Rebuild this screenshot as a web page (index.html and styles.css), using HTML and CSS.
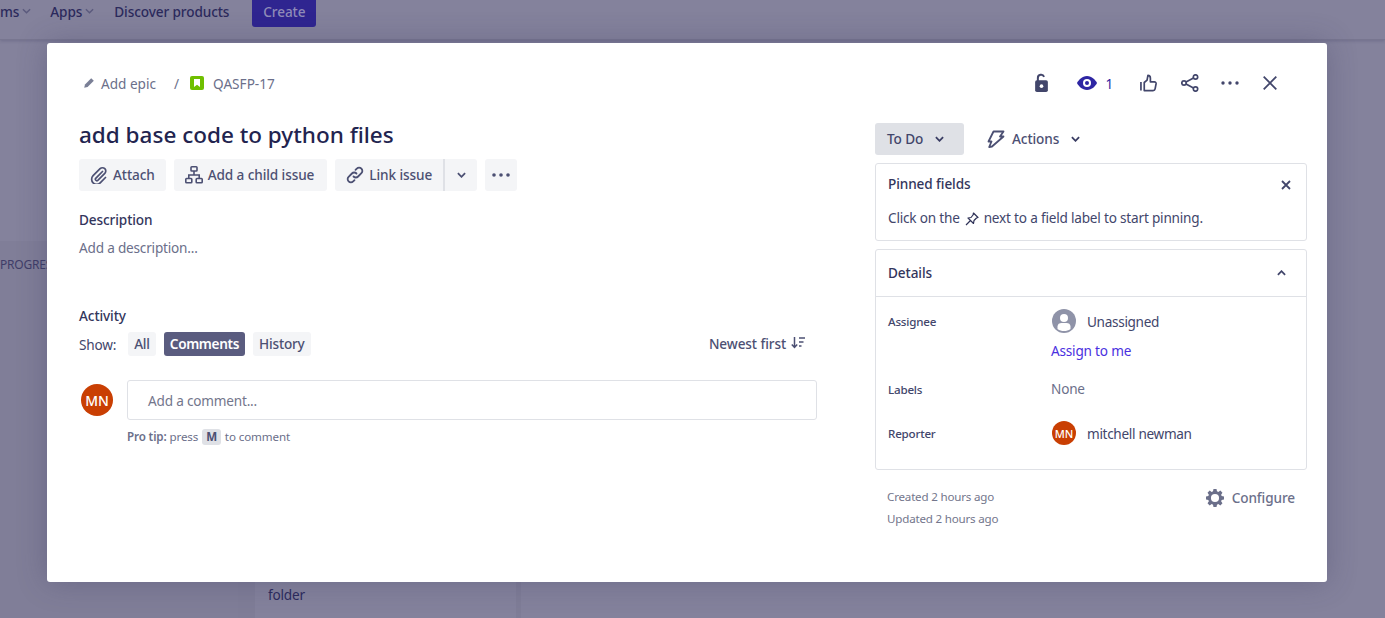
FILE: index.html
```html
<!DOCTYPE html>
<html lang="en">
<head>
<meta charset="utf-8">
<title>QASFP-17</title>
<link rel="stylesheet" href="styles.css">
</head>
<body>
<div class="page">
  <header class="topbar">
    <span class="nav-item nav-cut">ms<svg class="nav-chev" viewBox="0 0 10 6"><path d="M1 1l4 4 4-4"/></svg></span>
    <span class="nav-item">Apps<svg class="nav-chev" viewBox="0 0 10 6"><path d="M1 1l4 4 4-4"/></svg></span>
    <span class="nav-item">Discover products</span>
    <span class="create">Create</span>
  </header>
  <div class="board">
    <div class="lane lane-one"><span class="lane-title">PROGRESS</span></div>
    <div class="lane lane-two"><div class="bg-card"><span class="bg-card-text">folder</span></div></div>
  </div>
</div>

<div class="modal">
  <div class="modal-head">
    <div class="crumbs">
      <svg class="i12" viewBox="0 0 12 12"><path fill="#7a7f96" d="M8.200 1.200l2.600 2.600-6.200 6.200-3.400.8.8-3.400z"/></svg>
      <span class="crumb">Add epic</span>
      <span class="crumb-sep">/</span>
      <svg class="i14" viewBox="0 0 14 14"><rect width="14" height="14" rx="2" fill="#6fbf00"/><path fill="#fff" d="M4 3h6v8L7 8.800 4 11z"/></svg>
      <span class="crumb">QASFP-17</span>
    </div>
    <div class="head-actions">
      <svg class="ha ha-lock" viewBox="0 0 16 22"><path fill="none" stroke="#42466b" stroke-width="2.200" d="M4 9V5.500a3.500 3.500 0 0 1 6.800-1.200"/><rect x="1" y="8" width="14" height="13" rx="2" fill="#42466b"/><circle cx="8" cy="14.500" r="2" fill="#fff"/></svg>
      <span class="watch">
        <svg class="ha-eye" viewBox="0 0 20 14"><path fill="#2e26a3" d="M10 0c5 0 8.500 4 10 7-1.500 3-5 7-10 7S1.500 10 0 7c1.500-3 5-7 10-7z"/><circle cx="10" cy="7" r="4" fill="#fff"/><circle cx="10" cy="7" r="2" fill="#2e26a3"/></svg>
        <span class="watch-count">1</span>
      </span>
      <svg class="ha ha-thumb" viewBox="0 0 18 18"><path fill="none" stroke="#42466b" stroke-width="1.800" stroke-linejoin="round" d="M1 8v9M4.500 8.500v8.500h9.300c1.200 0 2-.7 2.200-1.800l1-5.200c.2-1.200-.6-2.200-1.800-2.200H11V4c0-1.700-1-3-2.600-3L7.500 6z"/></svg>
      <svg class="ha ha-share" viewBox="0 0 18 18"><g fill="none" stroke="#42466b" stroke-width="1.700"><circle cx="14.500" cy="3" r="2.200"/><circle cx="3" cy="9" r="2.200"/><circle cx="14.500" cy="15" r="2.200"/><path d="M5 8l7.500-4M5 10l7.500 4"/></g></svg>
      <svg class="ha ha-more" viewBox="0 0 18 4"><circle cx="2" cy="2" r="1.700" fill="#42466b"/><circle cx="9" cy="2" r="1.700" fill="#42466b"/><circle cx="16" cy="2" r="1.700" fill="#42466b"/></svg>
      <svg class="ha ha-close" viewBox="0 0 14 14"><path fill="none" stroke="#42466b" stroke-width="1.800" d="M.7.700l12.600 12.600M13.300.700L.7 13.300"/></svg>
    </div>
  </div>

  <div class="modal-body">
    <main class="left">
      <h1 class="title">add base code to python files</h1>
      <div class="toolbar">
        <button class="tbtn">
          <svg class="i18" viewBox="0 0 18 18"><path fill="none" stroke="#4c5073" stroke-width="1.700" stroke-linecap="round" d="M12.500 5.500l-6.800 6.800a1.500 1.500 0 0 0 2.100 2.100l7-7a3.300 3.300 0 0 0-4.700-4.700l-7 7a5 5 0 0 0 7.100 7.100l5.300-5.300"/></svg>
          Attach
        </button>
        <button class="tbtn tbtn-child">
          <svg class="i18" viewBox="0 0 18 18"><g fill="none" stroke="#4c5073" stroke-width="1.600"><rect x="6" y=".8" width="6" height="4.200" rx=".8"/><rect x=".8" y="12.500" width="6" height="4.200" rx=".8"/><rect x="11.200" y="12.500" width="6" height="4.200" rx=".8"/><path d="M9 5v4M3.800 12.500V9h10.400v3.500"/></g></svg>
          Add a child issue
        </button>
        <span class="split">
          <button class="tbtn tbtn-left">
            <svg class="i18" viewBox="0 0 18 18"><g fill="none" stroke="#4c5073" stroke-width="1.800" stroke-linecap="round"><path d="M7.500 10.500a3.200 3.200 0 0 0 4.600 0l3.300-3.300a3.200 3.200 0 0 0-4.600-4.600L9.500 3.900"/><path d="M10.500 7.500a3.200 3.200 0 0 0-4.600 0l-3.300 3.300a3.200 3.200 0 0 0 4.600 4.600l1.300-1.300"/></g></svg>
            Link issue
          </button>
          <button class="tbtn tbtn-right"><svg class="chev" viewBox="0 0 10 6"><path d="M1 1l4 4 4-4"/></svg></button>
        </span>
        <button class="tbtn tbtn-more"><svg class="more-sm" viewBox="0 0 18 4"><circle cx="2" cy="2" r="1.800"/><circle cx="9" cy="2" r="1.800"/><circle cx="16" cy="2" r="1.800"/></svg></button>
      </div>

      <h2 class="label desc-label">Description</h2>
      <p class="desc-ph">Add a description...</p>

      <h2 class="label activity-label">Activity</h2>
      <div class="show-row">
        <span class="show">Show:</span>
        <span class="pill">All</span>
        <span class="pill pill-on">Comments</span>
        <span class="pill">History</span>
        <span class="newest">Newest first
          <svg class="sort" viewBox="0 0 14 12"><g fill="none" stroke="#4c5073" stroke-width="1.500"><path d="M3.500 0v10M.8 7.500l2.700 3 2.700-3"/><path d="M8 1h6M8 5h4.500M8 9h2.500"/></g></svg>
        </span>
      </div>

      <div class="comment">
        <span class="avatar avatar-lg">MN</span>
        <div class="comment-col">
          <div class="comment-box">Add a comment...</div>
          <p class="tip"><b>Pro tip:</b> press <kbd class="key">M</kbd> to comment</p>
        </div>
      </div>
    </main>

    <aside class="right">
      <div class="status-row">
        <button class="status">To Do<svg class="chev chev-dark" viewBox="0 0 10 6"><path d="M1 1l4 4 4-4"/></svg></button>
        <span class="actions">
          <svg class="i18" viewBox="0 0 18 18"><path fill="none" stroke="#4c5073" stroke-width="1.800" stroke-linejoin="round" d="M6.500 1.500h10L13 6.500h3.500L5 16.500l-2.800.5 2.300-5.500H1.500z"/></svg>
          Actions
          <svg class="chev chev-dark" viewBox="0 0 10 6"><path d="M1 1l4 4 4-4"/></svg>
        </span>
      </div>

      <section class="card pinned">
        <div class="pinned-top">
          <span class="card-title">Pinned fields</span>
          <svg class="x-sm" viewBox="0 0 10 10"><path fill="none" stroke="#42466b" stroke-width="1.800" d="M1 1l8 8M9 1L1 9"/></svg>
        </div>
        <p class="pinned-text">Click on the
          <svg class="pin" viewBox="0 0 14 14"><path fill="none" stroke="#2f3257" stroke-width="1.200" stroke-linejoin="round" d="M8.500 1l4.500 4.500-1.500.5-2.500 2.500-.5 3L3 6l3-.5L8 3zM5.500 8.500L1 13"/></svg>
          next to a field label to start pinning.</p>
      </section>

      <section class="card details">
        <div class="details-head">
          <span class="card-title">Details</span>
          <svg class="chev chev-up" viewBox="0 0 10 6"><path d="M1 5l4-4 4 4"/></svg>
        </div>
        <div class="fields">
          <span class="f-label f-assignee">Assignee</span>
          <div class="f-value">
            <div class="person">
              <svg class="avatar-svg" viewBox="0 0 24 24"><circle cx="12" cy="12" r="12" fill="#8f93a8"/><circle cx="12" cy="9" r="4" fill="#fff"/><path fill="#fff" d="M5.500 20v-2.500c0-2.500 2-3.500 4-3.500h5c2 0 4 1 4 3.500V20c-2 1.500-4 2-6.500 2s-4.500-.5-6.500-2z"/></svg>
              <span>Unassigned</span>
            </div>
            <a class="assign">Assign to me</a>
          </div>
          <span class="f-label f-labels">Labels</span>
          <span class="f-value f-none">None</span>
          <span class="f-label f-reporter">Reporter</span>
          <div class="f-value person">
            <span class="avatar avatar-sm">MN</span>
            <span>mitchell newman</span>
          </div>
        </div>
      </section>

      <div class="meta">
        <div class="dates">
          <span>Created 2 hours ago</span>
          <span>Updated 2 hours ago</span>
        </div>
        <span class="configure">
          <svg class="gear" viewBox="0 0 20 20"><path fill="#6b6f8a" fill-rule="evenodd" d="M8.300 0h3.400l.5 2.600 1.500.6 2.200-1.500 2.400 2.400-1.500 2.200.6 1.500 2.600.5v3.400l-2.600.5-.6 1.500 1.500 2.200-2.400 2.400-2.200-1.500-1.500.6-.5 2.600H8.300l-.5-2.600-1.500-.6-2.200 1.500-2.400-2.400 1.500-2.200-.6-1.500L0 11.700V8.300l2.600-.5.6-1.500-1.500-2.200 2.400-2.400 2.200 1.500 1.500-.6zM10 5.500a4.500 4.500 0 1 0 0 9 4.500 4.500 0 0 0 0-9z"/></svg>
          Configure
        </span>
      </div>
    </aside>
  </div>
</div>
</body>
</html>
```
FILE: styles.css
```css
* { box-sizing: border-box; }
html, body { margin: 0; padding: 0; height: 100%; overflow: hidden; }
body {
  background: #84829c;
  font-family: "Noto Sans", "Open Sans", sans-serif;
  color: #2f3257;
  font-size: 13.600px;
  letter-spacing: -0.2px;
}
h1, h2, p { margin: 0; font-weight: inherit; }
button { font: inherit; letter-spacing: inherit; border: 0; margin: 0; padding: 0; color: inherit; }

.page { height: 618px; display: flex; flex-direction: column; }
.topbar {
  height: 40px;
  display: flex;
  align-items: flex-start;
  color: #2c2a5c;
  font-weight: 500;
  letter-spacing: -0.1px;
  border-bottom: 1px solid #787690;
  background: #84829c;
  box-shadow: 0 1px 3px rgba(50, 50, 90, .25);
}
.nav-item { display: inline-flex; align-items: center; height: 22px; margin-right: 20px; }
.nav-cut { margin-right: 19px; }
.nav-chev { width: 9px; height: 6px; margin-left: 3px; fill: none; stroke: #5b5a7d; stroke-width: 1.600; }
.create {
  margin-left: 3px;
  width: 64px;
  height: 27px;
  background: #2f2590;
  color: #8f8cb8;
  border-radius: 0 0 3px 3px;
  display: flex;
  align-items: center;
  justify-content: center;
  padding-bottom: 4px;
}
.board { flex: 1; display: flex; align-items: stretch; padding-top: 201px; }
.lane { background: #807e98; }
.lane-one { width: 238px; padding-top: 15px; color: #3f3d68; font-size: 12px; white-space: nowrap; overflow: hidden; }
.lane-two { width: 283px; display: flex; padding-left: 17px; background: #7f7d97; }
.bg-card { width: 261px; background: #84829c; display: flex; align-items: flex-end; padding: 0 0 14px 13px; }
.bg-card-text { color: #2c2a5c; }

.modal {
  position: absolute;
  left: 47px;
  top: 43px;
  width: 1280px;
  height: 539px;
  background: #fff;
  border-radius: 3px;
  padding: 20px 20px 0 32px;
  box-shadow: 0 0 30px rgba(50, 50, 90, .3);
}
.modal-head { display: flex; justify-content: space-between; align-items: center; height: 40px; }
.crumbs { display: flex; align-items: center; color: #6b6f8a; padding-left: 4px; letter-spacing: 0; }
.i12 { width: 12px; height: 12px; margin-right: 6px; }
.i14 { width: 14px; height: 14px; margin-right: 9px; }
.i18 { width: 18px; height: 18px; flex: none; }
.crumb-sep { margin: 0 11px 0 18px; }
.head-actions { display: flex; align-items: center; padding-right: 30px; }
.ha { display: block; flex: none; }
.ha-lock { width: 15px; height: 20px; margin-right: 28px; }
.watch { display: flex; align-items: center; margin-right: 27px; }
.ha-eye { width: 20px; height: 14px; margin-right: 8px; }
.watch-count { color: #2e26a3; }
.ha-thumb { width: 17px; height: 18px; margin-right: 24px; }
.ha-share { width: 18px; height: 18px; margin-right: 22px; }
.ha-more { width: 18px; height: 4px; margin-right: 24px; }
.ha-close { width: 14px; height: 14px; }

.modal-body { display: flex; gap: 58px; margin-top: 16px; }
.left { width: 738px; flex: none; }
.right { width: 432px; flex: none; padding-top: 4px; }

.title { font-size: 22.500px; line-height: 32px; color: #22244f; font-weight: 500; letter-spacing: 0; }
.toolbar { display: flex; gap: 8px; margin-top: 8px; }
.tbtn {
  height: 32px;
  background: #f4f5f7;
  border-radius: 3px;
  color: #4c5073;
  font-weight: 500;
  letter-spacing: -0.1px;
  display: inline-flex;
  align-items: center;
  gap: 5px;
  padding: 0 11px 2px;
}
.tbtn svg { margin-top: 2px; }
.tbtn-child { padding-right: 13px; }
.split { display: inline-flex; }
.tbtn-left { border-radius: 3px 0 0 3px; border-right: 2px solid #dfe1e6; }
.tbtn-right { border-radius: 0 3px 3px 0; width: 32px; justify-content: center; padding: 0 0 2px; }
.tbtn-more { width: 32px; justify-content: center; padding: 0 0 2px; }
.more-sm { width: 18px; height: 4px; fill: #4c5073; }
.chev { width: 9px; height: 6px; fill: none; stroke: #4c5073; stroke-width: 2; }
.chev-dark { stroke: #3a3d63; }
.chev-up { stroke: #42466b; }

.label { font-size: 13.600px; line-height: 20px; font-weight: 500; letter-spacing: -0.1px; color: #33365c; }
.desc-label { margin-top: 19px; }
.desc-ph { margin-top: 8px; line-height: 20px; color: #6b6f8a; }
.activity-label { margin-top: 48px; }
.show-row { display: flex; align-items: center; height: 24px; margin-top: 6px; }
.show { margin-right: 12px; color: #42466b; }
.pill {
  height: 24px;
  padding: 0 6px 2px;
  margin-right: 8px;
  border-radius: 3px;
  background: #f4f5f7;
  color: #4c5073;
  font-weight: 500;
  letter-spacing: -0.2px;
  display: inline-flex;
  align-items: center;
}
.pill-on { background: #5a5c7f; color: #fff; font-weight: 600; letter-spacing: -0.35px; }
.newest { margin-left: auto; margin-right: 12px; margin-bottom: 2px; color: #4c5073; font-weight: 500; letter-spacing: -0.1px; display: inline-flex; align-items: center; gap: 5px; }
.sort { width: 14px; height: 12px; }

.comment { display: flex; margin-top: 24px; }
.avatar {
  border-radius: 50%;
  background: #c93f03;
  color: #fff;
  display: inline-flex;
  align-items: center;
  justify-content: center;
  flex: none;
  letter-spacing: 0;
}
.avatar-lg { width: 32px; height: 32px; font-size: 14px; font-weight: 500; margin: 4px 14px 0 2px; }
.comment-col { flex: 1; }
.comment-box {
  height: 40px;
  border: 1px solid #dfe1e6;
  border-radius: 3px;
  padding: 0 20px;
  display: flex;
  align-items: center;
  color: #73768c;
}
.tip { margin-top: 8px; font-size: 11.600px; line-height: 18px; color: #6b6f8a; letter-spacing: -0.12px; }
.tip b { font-weight: 600; }
.key {
  font: inherit;
  font-weight: 700;
  background: #dfe1e6;
  border-radius: 3px;
  padding: 0 4px;
  margin: 0 1px;
  color: #4c5073;
  display: inline-block;
  line-height: 16px;
}

.status-row { display: flex; align-items: center; height: 32px; }
.status {
  width: 89px;
  height: 32px;
  background: #dfe1e6;
  border-radius: 3px;
  color: #42466b;
  font-weight: 500;
  letter-spacing: -0.1px;
  display: flex;
  align-items: center;
  padding: 0 0 2px 12px;
  gap: 12px;
}
.status svg { margin-top: 2px; }
.actions { display: inline-flex; align-items: center; margin-left: 23px; padding-bottom: 2px; color: #4c5073; font-weight: 500; letter-spacing: -0.1px; gap: 7px; }
.actions svg { margin-top: 2px; }
.actions .chev { margin-left: 5px; }

.card { border: 1px solid #dfe1e6; border-radius: 3px; }
.pinned { margin-top: 8px; height: 78px; padding: 0 12px; }
.pinned-top { display: flex; justify-content: space-between; align-items: center; height: 41px; padding-right: 3px; }
.card-title { font-weight: 500; letter-spacing: -0.1px; color: #33365c; margin-bottom: 2px; }
.x-sm { width: 10px; height: 10px; }
.pinned-text { line-height: 20px; margin-top: 3px; color: #42466b; display: flex; align-items: center; gap: 5px; }
.pin { width: 14px; height: 14px; margin-top: 2px; }

.details { margin-top: 8px; height: 221px; }
.details-head {
  height: 47px;
  padding: 0 20px 0 12px;
  border-bottom: 1px solid #dfe1e6;
  display: flex;
  justify-content: space-between;
  align-items: center;
}
.fields {
  display: grid;
  grid-template-columns: 163px 1fr;
  padding: 12px 12px 0;
}
.f-label { font-size: 11.600px; font-weight: 500; color: #42466b; }
.f-assignee { padding-top: 5px; }
.f-labels { padding-top: 19px; line-height: 20px; }
.f-reporter { align-self: center; }
.f-value { color: #42466b; }
.person { display: flex; align-items: center; gap: 11px; height: 24px; padding-left: 1px; letter-spacing: -0.32px; }
.avatar-svg { width: 24px; height: 24px; flex: none; }
.assign { display: block; margin-top: 8px; line-height: 20px; color: #4a2fe0; }
.f-none { padding-top: 18px; line-height: 20px; color: #6b6f8a; height: 60px; }
.avatar-sm { width: 24px; height: 24px; font-size: 11px; font-weight: 500; letter-spacing: 0; }

.meta { display: flex; justify-content: space-between; padding: 16px 12px 0; }
.dates { display: flex; flex-direction: column; font-size: 11.600px; line-height: 22px; color: #73768c; }
.configure { display: inline-flex; align-items: center; gap: 8px; height: 22px; color: #6b6f8a; font-weight: 500; letter-spacing: -0.1px; }
.gear { width: 18px; height: 18px; margin-top: 2px; }
```
